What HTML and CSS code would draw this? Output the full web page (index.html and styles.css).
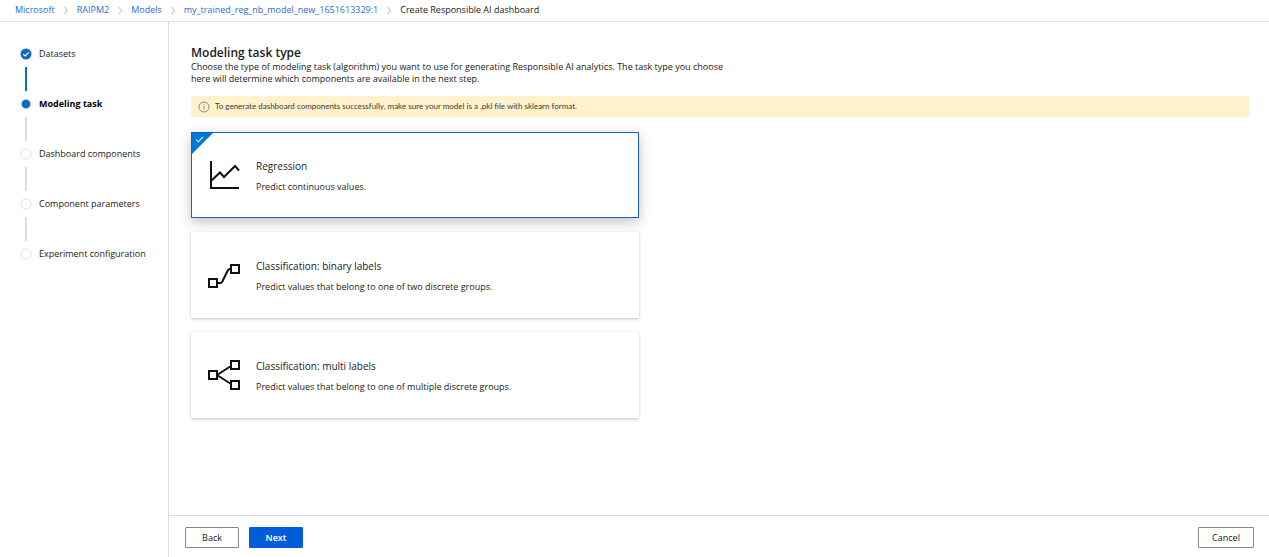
FILE: index.html
```html
<!DOCTYPE html>
<html lang="en">
<head>
<meta charset="utf-8">
<meta name="viewport" content="width=device-width, initial-scale=1">
<title>Create Responsible AI dashboard</title>
<link rel="stylesheet" href="styles.css">
</head>
<body>
<header class="topbar">
  <nav aria-label="Breadcrumb">
    <ol class="breadcrumb">
      <li><a href="#">Microsoft</a><svg class="chevron" viewBox="0 0 6 10" aria-hidden="true"><path d="M1 1l4 4-4 4"/></svg></li>
      <li><a href="#">RAIPM2</a><svg class="chevron" viewBox="0 0 6 10" aria-hidden="true"><path d="M1 1l4 4-4 4"/></svg></li>
      <li><a href="#">Models</a><svg class="chevron" viewBox="0 0 6 10" aria-hidden="true"><path d="M1 1l4 4-4 4"/></svg></li>
      <li><a href="#">my_trained_reg_nb_model_new_1651613329:1</a><svg class="chevron" viewBox="0 0 6 10" aria-hidden="true"><path d="M1 1l4 4-4 4"/></svg></li>
      <li aria-current="page">Create Responsible AI dashboard</li>
    </ol>
  </nav>
</header>
<div class="layout">
  <aside class="sidebar">
    <ol class="steps">
      <li class="step step-done">
        <svg class="marker" viewBox="0 0 12 12" aria-hidden="true"><circle class="disc" cx="6" cy="6" r="5.5"/><path class="tick" d="M3.3 6.2l1.9 1.8 3.6-3.7"/></svg>
        <span>Datasets</span>
      </li>
      <li class="step step-current" aria-current="step">
        <svg class="marker" viewBox="0 0 12 12" aria-hidden="true"><circle class="halo" cx="6" cy="6" r="5"/><circle class="disc" cx="6" cy="6" r="4.3"/></svg>
        <span>Modeling task</span>
      </li>
      <li class="step">
        <svg class="marker" viewBox="0 0 12 12" aria-hidden="true"><circle class="ring" cx="6" cy="6" r="5"/></svg>
        <span>Dashboard components</span>
      </li>
      <li class="step">
        <svg class="marker" viewBox="0 0 12 12" aria-hidden="true"><circle class="ring" cx="6" cy="6" r="5"/></svg>
        <span>Component parameters</span>
      </li>
      <li class="step">
        <svg class="marker" viewBox="0 0 12 12" aria-hidden="true"><circle class="ring" cx="6" cy="6" r="5"/></svg>
        <span>Experiment configuration</span>
      </li>
    </ol>
  </aside>
  <div class="content">
    <main class="main">
      <h1 class="title">Modeling task type</h1>
      <p class="intro">Choose the type of modeling task (algorithm) you want to use for generating Responsible AI analytics. The task type you choose here will determine which components are available in the next step.</p>
      <div class="notice">
        <svg class="notice-icon" viewBox="0 0 12 12" aria-hidden="true"><circle cx="6" cy="6" r="5"/><path d="M6 5.2v3.4M6 3.2v1"/></svg>
        <span>To generate dashboard components successfully, make sure your model is a .pkl file with sklearn format.</span>
      </div>
      <div class="cards" role="radiogroup" aria-label="Modeling task type">
        <label class="card">
          <input class="card-radio" type="radio" name="task" value="regression" checked>
          <svg class="card-tick" viewBox="0 0 10 8" aria-hidden="true"><path d="M1 4l2.6 2.6L9 1.2"/></svg>
          <svg class="card-icon" viewBox="0 0 34 34" aria-hidden="true"><path d="M3 2v27H31M3.500 21.500l8.500-8 4 4.500L27 7l4 4.500"/></svg>
          <span class="card-text"><span class="card-title">Regression</span><span>Predict continuous values.</span></span>
        </label>
        <label class="card">
          <input class="card-radio" type="radio" name="task" value="binary">
          <svg class="card-tick" viewBox="0 0 10 8" aria-hidden="true"><path d="M1 4l2.6 2.6L9 1.2"/></svg>
          <svg class="card-icon" viewBox="0 0 34 34" aria-hidden="true"><path d="M1 20h8v8H1zM23 6h8v8h-8zM9 24h3.500c1.200 0 1.600-.8 2.100-2l5-10.200c.5-1.200 1-1.800 2.200-1.800H23"/></svg>
          <span class="card-text"><span class="card-title">Classification: binary labels</span><span>Predict values that belong to one of two discrete groups.</span></span>
        </label>
        <label class="card">
          <input class="card-radio" type="radio" name="task" value="multi">
          <svg class="card-tick" viewBox="0 0 10 8" aria-hidden="true"><path d="M1 4l2.6 2.6L9 1.2"/></svg>
          <svg class="card-icon" viewBox="0 0 34 34" aria-hidden="true"><path d="M1 12h8v8H1zM23 2h8v8h-8zM23 22h8v8h-8zM9 16l14-9M9 16l14 9"/></svg>
          <span class="card-text"><span class="card-title">Classification: multi labels</span><span>Predict values that belong to one of multiple discrete groups.</span></span>
        </label>
      </div>
    </main>
    <footer class="footer">
      <button class="button" type="button">Back</button>
      <button class="button button-primary" type="button">Next</button>
      <button class="button button-end" type="button">Cancel</button>
    </footer>
  </div>
</div>
</body>
</html>
```
FILE: styles.css
```css
*, *::before, *::after { box-sizing: border-box; }

body {
  margin: 0;
  min-height: 100vh;
  display: flex;
  flex-direction: column;
  background: #fff;
  color: #1b1a19;
  font: 9px/12px "Open Sans", "Noto Sans", sans-serif;
}

ol { list-style: none; margin: 0; padding: 0; }

.topbar {
  padding: 3px 15px 4px;
  border-bottom: 1px solid #dedede;
}

.breadcrumb { display: flex; flex-wrap: wrap; line-height: 14px; }
.breadcrumb li { display: flex; align-items: center; }
.breadcrumb a { color: #2a6ae0; text-decoration: none; }

.chevron {
  width: 6px;
  height: 9px;
  margin: 0 8px;
  fill: none;
  stroke: #a6a6a6;
}

.layout { flex: 1; display: flex; }

.sidebar {
  flex: 0 0 169px;
  padding: 23px 0 0 20px;
  border-right: 1px solid #dcdcdc;
}

.step {
  display: grid;
  grid-template-columns: 12px 1fr;
  column-gap: 7px;
  align-items: center;
  line-height: 18px;
}

.step:not(:last-child)::after {
  content: "";
  grid-column: 1;
  justify-self: center;
  width: 2px;
  height: 24px;
  margin: 4px 0;
  background: #dedede;
}

.step-done:not(:last-child)::after { background: #1068bf; }
.step-current { font-weight: 700; color: #000; }

.marker { width: 12px; height: 12px; fill: none; }
.disc { fill: #1068bf; }
.halo { stroke: #c9d5e2; }
.ring { stroke: #e3e1df; }
.tick { stroke: #fff; stroke-width: 1.2; }

.content { flex: 1; min-width: 0; display: flex; flex-direction: column; }
.main { flex: 1; padding: 23px 20px 24px 22px; }

.title {
  margin: 0;
  font-size: 12px;
  line-height: 16px;
  font-weight: 600;
}

.intro { max-width: 545px; margin: 0; }

.notice {
  display: flex;
  align-items: center;
  gap: 5px;
  margin-top: 11px;
  padding: 4px 7px;
  background: #fff2cd;
  color: #3b3a39;
  font-family: Lato, "Open Sans", sans-serif;
  font-size: 8px;
  line-height: 13px;
}

.notice-icon { width: 12px; height: 12px; fill: none; stroke: #8e8979; }

.cards {
  display: grid;
  gap: 14px;
  max-width: 448px;
  margin-top: 15px;
}

.card {
  position: relative;
  display: flex;
  align-items: center;
  gap: 14px;
  min-height: 86px;
  padding: 18px 16px 16px;
  border: 1px solid transparent;
  background: #fff;
  box-shadow: 0 1px 3px rgba(0, 0, 0, .24);
  cursor: pointer;
}

.card:has(.card-radio:checked) {
  border-color: #1160d4;
  box-shadow: 0 4px 12px rgba(0, 0, 0, .24);
}

.card-radio {
  appearance: none;
  position: absolute;
  top: 0;
  left: 0;
  width: 21px;
  height: 21px;
  margin: 0;
  clip-path: polygon(0 0, 100% 0, 0 100%);
}

.card-radio:checked { background: #0078d7; }

.card-tick {
  position: absolute;
  top: 3px;
  left: 3px;
  width: 9px;
  height: 7px;
  fill: none;
  stroke: #fff;
  stroke-width: 1.2;
  visibility: hidden;
}

.card-radio:checked + .card-tick { visibility: visible; }

.card-icon {
  flex: none;
  width: 34px;
  height: 34px;
  fill: none;
  stroke: #111;
  stroke-width: 2;
}

.card-text { display: grid; gap: 7px; line-height: 14px; }
.card-title { font-size: 10px; }
.card-radio:checked ~ .card-text .card-title { font-weight: 500; }

.footer {
  display: flex;
  gap: 10px;
  padding: 11px 15px 9px 16px;
  border-top: 1px solid #dcdcdc;
}

.button {
  min-width: 54px;
  padding: 3px 12px;
  border: 1px solid #8a8886;
  border-radius: 1px;
  background: #fff;
  color: #1b1a19;
  font: inherit;
  line-height: 13px;
}

.button-primary {
  border-color: #015cda;
  background: #015cda;
  color: #fff;
  font-weight: 600;
}

.button-end { min-width: 56px; margin-left: auto; }
```
